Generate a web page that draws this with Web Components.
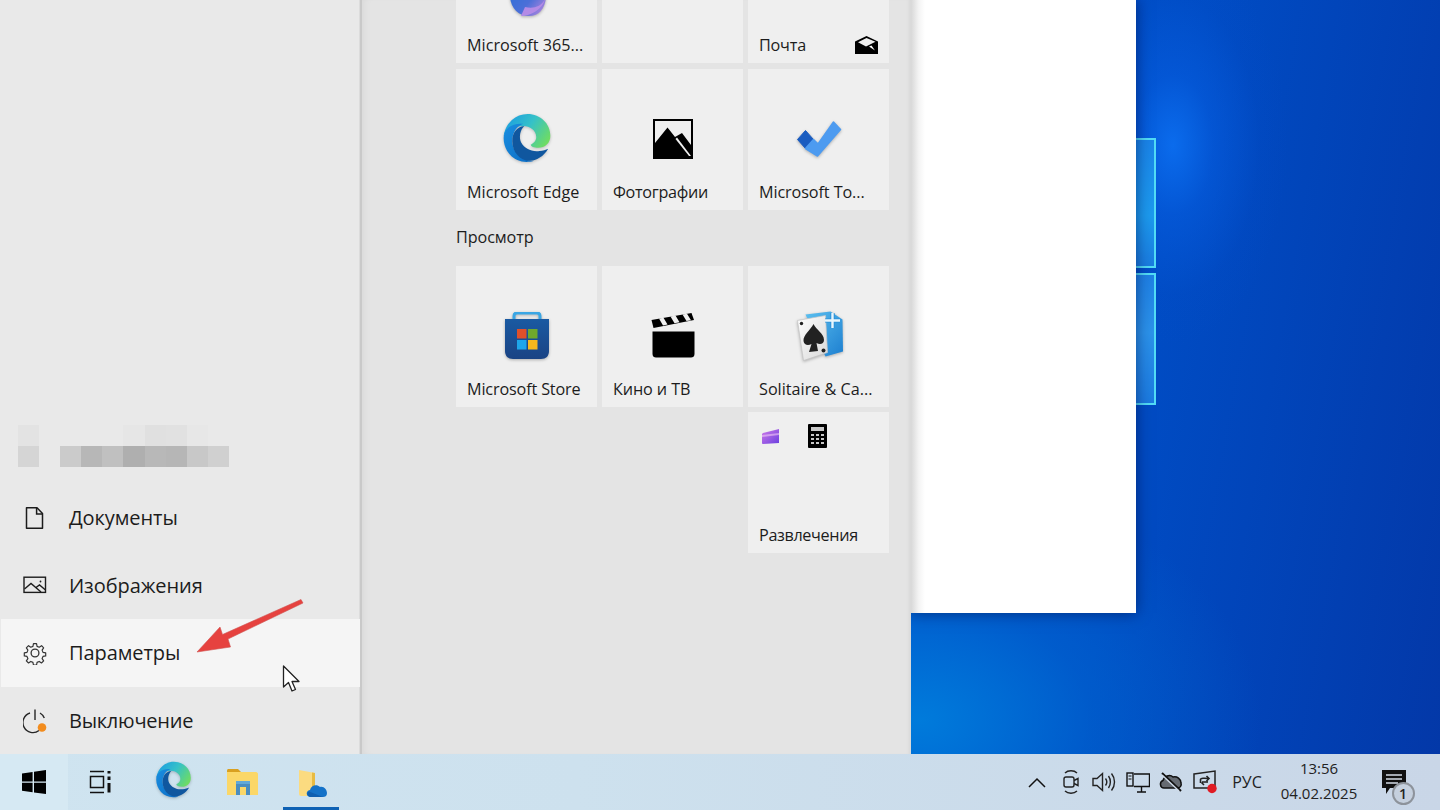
<!DOCTYPE html>
<html lang="ru"><head><meta charset="utf-8"><title>Start</title>
<style>
html,body{margin:0;padding:0;width:1440px;height:810px;overflow:hidden;background:#0050c8}
body{font-family:"Open Sans","Noto Sans",sans-serif;color:#1a1a1a}
svg{display:block}
.fx{filter:drop-shadow(0 1px 1.5px rgba(0,0,0,.28))}
</style></head><body>
<desk-screen>
  <start-menu slot="menu">
    <rail-item slot="rail" label="Документы"><svg width="24" height="24" viewBox="0 0 24 24" fill="none" stroke="#1c1c1c" stroke-width="1.5" style="margin-left:-1px"><path d="M4.5 1.800H15L20.500 7.500V22.200H4.500Z" stroke-linejoin="round"/><path d="M14.600 2V8H20.500"/></svg></rail-item>
    <rail-item slot="rail" label="Изображения"><svg width="24" height="24" viewBox="0 0 24 24" fill="none" stroke="#1c1c1c" stroke-width="1.400"><rect x="1" y="4.200" width="21.500" height="15.200"/><path d="M1.500 16L8 10.500 18 19M13 14.500l3.500-2.500 6 5"/><circle cx="17.500" cy="8.500" r=".9" fill="#1c1c1c" stroke="none"/></svg></rail-item>
    <rail-item slot="rail" label="Параметры" hot><svg width="24" height="24" viewBox="0 0 24 24" fill="none" stroke="#333" stroke-width="1.300"><path d="M10.300 1.600h3.400l.6 3 2.400 1 2.600-1.700 2.300 2.400-1.700 2.500 1 2.500 3 .6v3.300l-3 .6-1 2.400 1.700 2.600-2.400 2.300-2.500-1.700-2.400 1-.6 3h-3.400l-.6-3-2.400-1-2.500 1.700-2.400-2.300 1.700-2.600-1-2.400-3-.6v-3.300l3-.6 1-2.500-1.700-2.500 2.400-2.400 2.500 1.700 2.400-1z" transform="translate(1.200 1.200) scale(.9)" stroke-linejoin="round"/><circle cx="12" cy="12" r="3.900"/></svg></rail-item>
    <rail-item slot="rail" label="Выключение" style="--ls:-.25px"><svg width="24" height="26" viewBox="0 0 24 26" fill="none" stroke="#262626" stroke-width="1.400" style="margin-top:2px"><path d="M12 1.500V12"/><path d="M7 5A10 10 0 1 0 16 22.500"/><path d="M17 5A10 10 0 0 1 21.300 10"/><circle cx="19" cy="19.500" r="4.300" fill="#f28c1e" stroke="none"/></svg></rail-item>

    <app-tile label="Microsoft 365..." slot="row0"><svg class="fx" width="48" height="48" viewBox="0 0 48 48"><defs><linearGradient id="m3" x1="0" y1="0" x2="1" y2="1"><stop offset="0" stop-color="#1f6fd6"/><stop offset=".6" stop-color="#4b6fd8"/><stop offset="1" stop-color="#c78ae0"/></linearGradient></defs><path d="M12 2H36C44 2 44 10 44 16L43 28C42 40 36 47 26 47 16 47 8 40 7 28Z" fill="url(#m3)"/><path d="M18 47C28 47 40 40 42 30 38 38 30 40 22 38Z" fill="#b38be6"/></svg></app-tile>
    <app-tile label="" slot="row0"></app-tile>
    <app-tile label="Почта" slot="row0" corner style="--ls:-.2px"><svg width="23" height="18" viewBox="0 0 23 18"><path d="M11.500 0L23 5.600V18H0V5.600ZM3 6.200 11 10.500 20.500 5.800 11.500 1.900Z" fill="#000" fill-rule="evenodd"/><path d="M14 10.500L20 14.500 16.500 9.500Z" fill="#fff"/></svg></app-tile>

    <app-tile label="Microsoft Edge" slot="row1"><edge-logo size="50" style="margin-top:3px"></edge-logo></app-tile>
    <app-tile label="Фотографии" slot="row1" style="--ls:-.3px"><svg width="40" height="40" viewBox="0 0 40 40"><path d="M0 0H40V40H0ZM2 2V38H38V2Z" fill="#000" fill-rule="evenodd"/><path d="M2 24L14.500 8.500 22 18 29 14 38 26V38H2Z" fill="#000"/><path d="M22.500 20L36 37H38L24 18.500Z" fill="#f0f0f0"/></svg></app-tile>
    <app-tile label="Microsoft To..." slot="row1" style="--ls:-.1px"><svg class="fx" width="46" height="40" viewBox="0 0 46 40"><path d="M1.500 20.500L9.500 11.500 17.500 20.500 9.500 29.500Z" fill="#1a5cc0" stroke="#1a5cc0" stroke-linejoin="round"/><path d="M9.500 29.500L17.500 20.500 22 25 37.500 3 44.500 10.500 21.500 37Z" fill="#4d9bf0" stroke="#4d9bf0" stroke-width="1.500" stroke-linejoin="round"/></svg></app-tile>

    <section-title slot="head">Просмотр</section-title>

    <app-tile label="Microsoft Store" slot="row2" style="--ls:-.15px"><svg class="fx" width="46" height="48" viewBox="0 0 46 48"><defs><linearGradient id="st" x1="0" y1="0" x2="0" y2="1"><stop offset="0" stop-color="#1a5aa2"/><stop offset="1" stop-color="#1a4384"/></linearGradient></defs><path d="M10 9V4C10 2 11 1 13 1H33C35 1 36 2 36 4V9" fill="none" stroke="#3aa6e4" stroke-width="3"/><path d="M1 7H45V39C45 44 42 47 37 47H9C4 47 1 44 1 39Z" fill="url(#st)"/><rect x="13" y="17" width="9.500" height="9.500" fill="#e0502a"/><rect x="24" y="17" width="9.500" height="9.500" fill="#6fa82c"/><rect x="13" y="28" width="9.500" height="9.500" fill="#1ea6ea"/><rect x="24" y="28" width="9.500" height="9.500" fill="#f4b81e"/></svg></app-tile>
    <app-tile label="Кино и ТВ" slot="row2" style="--ls:-.1px"><svg width="44" height="46" viewBox="0 0 44 46"><path d="M.5 7L40.500 0 43 7 2.500 15Z" fill="#000"/><path d="M8 5.500L12.500 4.800 16.500 11.500 12 12.500ZM19.500 3.500L24.500 2.500 28.500 9.200 23.500 10.200ZM31.500 1.500L36 .8 40 7.200 35.500 8Z" fill="#f0f0f0"/><path d="M1.500 18.500H43.500V41C43.500 43.500 42 44.500 40 44.500H5C3 44.500 1.500 43.500 1.500 41Z" fill="#000"/></svg></app-tile>
    <app-tile label="Solitaire &amp; Ca..." slot="row2"><svg class="fx" width="48" height="50" viewBox="0 0 48 50"><defs><linearGradient id="bl" x1="0" y1="0" x2="1" y2="1"><stop offset="0" stop-color="#5cc0f0"/><stop offset="1" stop-color="#1d7fd0"/></linearGradient><linearGradient id="cd" x1="0" y1="0" x2="1" y2="1"><stop offset="0" stop-color="#fff"/><stop offset="1" stop-color="#d8d8d8"/></linearGradient></defs><path d="M10.500 3.500L35.500 .5 47.500 8.500 48 40.500 30.500 45.500Z" fill="url(#bl)"/><path d="M2.500 9.500L30.500 4.500 32.500 41.500 8.500 49.500Z" fill="url(#cd)" stroke="#c4c4c4" stroke-width=".7" stroke-linejoin="round"/><path d="M18.500 13C21 19 29 22 29 29 29 33 25 34 21.500 32L23 40 14 41 16.500 33C13 35 9 34 8.500 30 8 24 15.500 19 18.500 13Z" fill="#222"/><circle cx="6.500" cy="12.500" r="1.700" fill="#222"/><circle cx="28.500" cy="39.500" r="2" fill="#222"/><path d="M37.500 2V17M30 9.500H45" stroke="#2a8fd8" stroke-width="4.200"/><path d="M37.500 2V17M30 9.500H45" stroke="#e8f6fd" stroke-width="2.400"/></svg></app-tile>

    <app-tile label="" slot="row3" style="visibility:hidden"></app-tile>
    <app-tile label="" slot="row3" style="visibility:hidden"></app-tile>
    <app-tile label="Развлечения" slot="row3" folder style="--ls:-.35px">
      <svg slot="mini" width="19" height="17" viewBox="0 0 19 17"><defs><linearGradient id="pu" x1="0" y1="0" x2="1" y2="1"><stop offset="0" stop-color="#d07ae8"/><stop offset="1" stop-color="#6a3fe0"/></linearGradient></defs><path d="M1 5L17 1V15L1 16C.5 16 0 15.500 0 15V6Z" fill="url(#pu)"/><path d="M0 7L17 5V7L0 9Z" fill="#f0c6f6" opacity=".6"/></svg>
      <svg slot="mini" width="19" height="24" viewBox="0 0 19 24"><rect width="19" height="24" fill="#000" rx="1"/><rect x="3" y="3" width="13" height="4" fill="#c8c8c8"/><g fill="#c8c8c8"><rect x="3" y="10" width="3" height="2"/><rect x="8" y="10" width="3" height="2"/><rect x="13" y="10" width="3" height="2"/><rect x="3" y="14" width="3" height="2"/><rect x="8" y="14" width="3" height="2"/><rect x="13" y="14" width="3" height="2"/><rect x="3" y="18" width="3" height="2"/><rect x="8" y="18" width="3" height="2"/><rect x="13" y="18" width="3" height="2"/></g></svg>
    </app-tile>
  </start-menu>
  <task-bar slot="bar">
    <task-btn slot="left" w="68" light><svg width="24" height="24" viewBox="0 0 24 24" fill="#000"><path d="M0 3.400L10.600 1.900V11.400H0ZM12 1.700L24 0V11.400H12ZM0 12.700H10.600V22.200L0 20.700ZM12 12.700H24V24L12 22.400Z"/></svg></task-btn>
    <task-btn slot="left" w="66"><svg width="24" height="24" viewBox="0 0 24 24" fill="none" stroke="#111" stroke-width="1.500"><path d="M1 1.500H15M1 22.500H15"/><rect x="1.500" y="6.500" width="13" height="11"/><path d="M20 1V3.500M20 22.500V13M20 6.500V10" stroke-width="3"/></svg></task-btn>
    <task-btn slot="left" w="78"><edge-logo size="37"></edge-logo></task-btn>
    <task-btn slot="left" w="59"><svg width="32" height="28" viewBox="0 0 32 28"><path d="M1 3C1 1 2 1 3 1H12L15 4H1Z" fill="#d9a020"/><path d="M1 4H30C31 4 32 5 32 6V27H1Z" fill="#fbd768"/><path d="M10 27V15C10 13.500 11 13 12 13H22C23 13 24 13.500 24 15V27H20V19H14V27Z" fill="#4b8dbf"/><path d="M10 13H24V16H10Z" fill="#62a8d8"/></svg></task-btn>
    <task-btn slot="left" w="56" active style="margin-left:12px;padding-left:4px"><svg width="28" height="32" viewBox="0 0 28 32"><path d="M0 4L16 7V30H2C1 30 0 29 0 28Z" fill="#fbdb80"/><path d="M13 6.500L16 7V22L13 24Z" fill="#e8bb42"/><path d="M12 31C7 31 6 25 11 24 12 19 18 18 21 21 25 20 28 24 28 27 28 30 26 31 24 31Z" fill="#1472c8"/><path d="M12 31C8 31 7 27 10 25.500L24 31Z" fill="#0f5fb0"/></svg></task-btn>

    <tray-ico slot="right" w="34"><svg width="18" height="11" viewBox="0 0 18 11" fill="none" stroke="#111" stroke-width="1.500"><path d="M1 10L9 2 17 10"/></svg></tray-ico>
    <tray-ico slot="right" w="34"><svg width="18" height="26" viewBox="0 0 18 26" fill="none" stroke="#222" stroke-width="1.400"><path d="M3 4C6 1 12 1 15 4M3 22C6 25 12 25 15 22"/><rect x="2" y="8" width="10" height="10" rx="2"/><path d="M12 11.500L16 9.500V16.500L12 14.500"/></svg></tray-ico>
    <tray-ico slot="right" w="33"><svg width="25" height="22" viewBox="0 0 25 22" fill="none" stroke="#222" stroke-width="1.400"><path d="M1 7.500H5L10.500 2.500V19.500L5 14.500H1Z"/><path d="M13.500 7.500C15 9.500 15 12.500 13.500 14.500M16.500 5C19 8.500 19 13.500 16.500 17M19.500 2.500C23.500 7.500 23.500 14.500 19.500 19.500"/></svg></tray-ico>
    <tray-ico slot="right" w="33"><svg width="24" height="21" viewBox="0 0 24 21" fill="none" stroke="#111" stroke-width="1.400"><path d="M8 2H23.500V14.500H8"/><path d="M11 20H20M15.500 14.500V20"/><rect x="1" y="1" width="6" height="13"/><path d="M2.500 4H5.500M2.500 7H5.500" stroke-width="1.100"/></svg></tray-ico>
    <tray-ico slot="right" w="33"><svg width="24" height="20" viewBox="0 0 24 20" fill="none" stroke="#111" stroke-width="1.500"><path d="M5 16C1 16 0 10 4 8.500 5 4 11 2 14 5 18 4 22 7 22 11 23 14 21 16 18 16Z" fill="#666b72"/><path d="M3 1L22 19" stroke-width="2"/><path d="M3 3L20 19" stroke="#d0dbe8" stroke-width="1.300"/></svg></tray-ico>
    <tray-ico slot="right" w="35"><svg width="24" height="24" viewBox="0 0 24 24" fill="none" stroke="#222" stroke-width="1.500"><path d="M1 4L22 1V18H1Z"/><path d="M7.500 13V9.500C7.500 8 12 8 15 8.500M13.500 6L16 8.500 13.500 11M15 12H9M11 15L8.500 12.500" stroke-width="1.600"/><circle cx="19" cy="18.500" r="4.700" fill="#e01b24" stroke="none"/></svg></tray-ico>
    <clock-text slot="right"></clock-text>
    <note-btn slot="right"></note-btn>
  </task-bar>
  <svg slot="over" style="position:absolute;left:190px;top:595px;z-index:9" width="120" height="64" viewBox="190 595 120 64"><path d="M301 599.500L303 603 228 639 230.500 647 197 652 220 627 222.500 634.500Z" fill="#e6423f" stroke="#cf5350" stroke-width=".6" stroke-linejoin="round"/></svg>
  <svg slot="over" style="position:absolute;left:282px;top:665px;z-index:9" width="19" height="28" viewBox="0 0 19 28"><path d="M1.500 1V22L6.500 17.500 10 26 13.500 24.500 10 16.500H17Z" fill="#fff" stroke="#222" stroke-width="1.300" stroke-linejoin="round"/></svg>
</desk-screen>
<script>
function def(name, css, html){
  customElements.define(name, class extends HTMLElement{
    constructor(){super();const r=this.attachShadow({mode:'open'});r.innerHTML='<style>'+css+'</style>'+(typeof html==='function'?html(this):html);}
  });
}
def('desk-screen',`
 :host{display:flex;flex-direction:column;position:relative;width:1440px;height:810px;overflow:hidden}
 .top{flex:1;min-height:0;display:flex}
 .paper{flex:1;position:relative;overflow:hidden;background:
   radial-gradient(ellipse 115px 200px at 262px 145px,rgba(14,118,250,.75) 0,rgba(8,98,232,.45) 35%,rgba(5,80,210,.12) 75%,rgba(5,80,210,0) 100%),
   radial-gradient(ellipse 340px 240px at 10px 720px,rgba(0,125,220,.95) 0,rgba(0,105,210,.5) 50%,rgba(0,90,200,0) 100%),
   linear-gradient(100deg,#0056d0 0,#004cc4 45%,#0338a8 100%)}
 .win{width:225px;height:613px;background:#fff;box-shadow:0 0 14px rgba(0,10,60,.55);position:absolute;left:0;top:0;z-index:2}
 .win::before{content:"";position:absolute;left:0;top:0;bottom:0;width:14px;background:linear-gradient(90deg,#d8d8d8,#f4f4f4 55%,#fff)}
 .pane{position:absolute;left:225px;width:20px;border:2px solid #52dcf6;border-left:0;box-sizing:border-box}
 .p1{top:138px;height:130px;background:linear-gradient(180deg,#1a84e8,#1c9aee 60%,#1a7ce0)}
 .p2{top:273px;height:132px;background:linear-gradient(180deg,#1e80e4,#2b92ea 45%,#1b7ae0)}
`,`<div class="top"><slot name="menu"></slot><div class="paper"><div class="pane p1"></div><div class="pane p2"></div><div class="win"></div></div></div><slot name="bar"></slot><slot name="over"></slot>`);

def('start-menu',`
 :host{display:flex;width:911px;height:754px;flex:none;overflow:hidden;position:relative;z-index:3}
 .rail{width:360px;background:#e9e9e9;display:flex;flex-direction:column;justify-content:flex-end;flex:none;box-shadow:inset -1px 0 0 #dcdcdc}
 .user{display:grid;grid-template-columns:repeat(10,21.100px);grid-template-rows:21px 21px;margin:0 0 17px 18px}
 .panel{flex:1;background:#e4e4e4;border-left:2px solid #c9c9c9;box-shadow:inset 8px 0 8px -6px rgba(0,0,0,.05),inset -4px 0 4px -3px rgba(0,0,0,.08);padding-left:94px;display:flex;flex-direction:column;overflow:hidden}
 .row{display:flex;gap:5px;flex:none}
 .row+.row{margin-top:5.500px}
 .r0{margin-top:-78px}
 .r2{margin-top:0!important}
`,()=>{
  const g={ '0,0':'#e3e3e3','0,5':'#e6e6e6','0,6':'#e0e0e0','0,7':'#e1e1e1','0,8':'#e7e7e7',
    '1,0':'#d5d5d5','1,2':'#cbcbcb','1,3':'#b7b7b7','1,4':'#c0c0c0','1,5':'#afafaf','1,6':'#b8b8b8','1,7':'#b6b6b6','1,8':'#c8c8c8','1,9':'#d0d0d0'};
  let h='';for(let r=0;r<2;r++)for(let c=0;c<10;c++){h+='<i style="display:block;background:'+(g[r+','+c]||'transparent')+'"></i>'}
  return `<div class="rail"><div class="user" aria-hidden="true">${h}</div><slot name="rail"></slot></div>
  <div class="panel"><div class="row r0"><slot name="row0"></slot></div><div class="row"><slot name="row1"></slot></div><slot name="head"></slot><div class="row r2"><slot name="row2"></slot></div><div class="row"><slot name="row3"></slot></div></div>`;
});

def('rail-item',`
 :host{display:flex;align-items:center;height:67.500px;flex:none;font:20px/1 "Open Sans","Noto Sans",sans-serif;color:#1c1c1c}
 :host([hot]){background:#f5f5f5;margin-left:1px}
 :host([hot]) .i{width:68px}
 .i{width:69px;flex:none;display:flex;justify-content:center;box-sizing:border-box}
 span{letter-spacing:var(--ls,-.08px);padding-top:1px}
`,el=>`<div class="i"><slot></slot></div><span>${el.getAttribute('label')}</span>`);

def('app-tile',`
 :host{display:block;position:relative;width:141px;height:141px;flex:none;background:#efefef}
 .c{position:absolute;inset:0;display:flex;align-items:center;justify-content:center}
 :host([corner]) .c{inset:auto 11px 9px auto}
 :host([folder]) .m{display:flex;position:absolute;left:14px;top:12px;gap:27px;align-items:center}
 .l{position:absolute;left:11px;bottom:8px;font:16.200px/20px "Open Sans","Noto Sans",sans-serif;letter-spacing:var(--ls,0);color:#1c1c1c;white-space:nowrap}
`,el=>`<div class="c"><slot></slot></div><div class="m"><slot name="mini"></slot></div><span class="l">${el.getAttribute('label')||''}</span>`);

def('section-title',`:host{display:block;height:56px;flex:none;box-sizing:border-box;padding-top:17.500px;font:16.200px/20px "Open Sans","Noto Sans",sans-serif;letter-spacing:-.1px;color:#1c1c1c}`,`<slot></slot>`);

def('edge-logo',`:host{display:block;filter:drop-shadow(0 1px 1.5px rgba(0,0,0,.22))}`,el=>{const s=el.getAttribute('size');return `<svg width="${s}" height="${s}" viewBox="2 1 45 46"><defs>
 <linearGradient id="a" x1="0" y1=".2" x2="1" y2=".7"><stop offset="0" stop-color="#1b9de2"/><stop offset=".5" stop-color="#35c1c8"/><stop offset="1" stop-color="#6fdc62"/></linearGradient>
 <linearGradient id="b" x1="0" y1="0" x2="1" y2="1"><stop offset="0" stop-color="#1a8ee0"/><stop offset="1" stop-color="#0c6cc4"/></linearGradient></defs>
 <path d="M3 22C5 10 14 2 25 2 37 2 46 11 46 22 46 29 41 33 35 33 31 33 28 32 28 30 30 29 33 27 33 23 33 17 27 13 21 13 13 13 6 17 3 22Z" fill="url(#a)"/>
 <path d="M3 24C3 15 11 10 21 11 15 13 11 19 11 27 11 37 20 45 31 45 28 46 26 46 24 46 12 46 3 36 3 24Z" fill="url(#b)"/>
 <path d="M11 27C11 19 15 14 22 13 18 17 17 23 19 28 22 34 29 37 36 36 39 36 42 35 44 34 40 41 33 45 27 45 18 45 11 37 11 27Z" fill="#10579f"/></svg>`});

def('task-bar',`
 :host{display:flex;height:56px;flex:none;justify-content:space-between;background:linear-gradient(90deg,#cfe4f0 0,#cde1ee 40%,#c9d6e7 100%);position:relative;z-index:4}
 .s{display:flex;align-items:stretch}
 .r{padding-right:15px}
`,`<div class="s"><slot name="left"></slot></div><div class="s r"><slot name="right"></slot></div>`);

def('task-btn',`
 :host{display:flex;align-items:center;justify-content:center;height:56px;box-sizing:border-box;flex:none;position:relative}
 :host([light]){background:#d6e9f3}
 :host([active])::after{content:"";position:absolute;left:0;right:0;bottom:0;height:3px;background:#0f62b4}
`,el=>{el.style.width=el.getAttribute('w')+'px';return '<slot></slot>'});

def('tray-ico',`:host{display:flex;align-items:center;justify-content:center;height:56px;flex:none}`,el=>{el.style.width=el.getAttribute('w')+'px';return '<slot></slot>'});

def('clock-text',`
 :host{display:flex;align-items:stretch;height:56px;flex:none;font:15px/1 "Open Sans","Noto Sans",sans-serif;color:#222}
 .lang{width:50px;display:flex;align-items:center;justify-content:center;font-size:16px}
 .t{width:94px;display:flex;flex-direction:column;align-items:center;justify-content:center;gap:10px;padding-bottom:2px;box-sizing:border-box}
`,`<div class="lang">РУС</div><div class="t"><span>13:56</span><span>04.02.2025</span></div>`);

def('note-btn',`
 :host{display:block;position:relative;width:59px;height:56px;flex:none}
 svg{position:absolute;left:16px;top:16px}
 b{position:absolute;left:25.500px;top:27.500px;width:23px;height:23px;box-sizing:border-box;border-radius:50%;border:2px solid #8d939b;background:#c5d0de;font:600 14px/19px "Open Sans","Noto Sans",sans-serif;text-align:center;color:#222}
`,`<svg width="24" height="24" viewBox="0 0 24 24"><path d="M0 0H24V18H8L4 24V18H0Z" fill="#111"/><path d="M4 5H20M4 9H20M4 13H16" stroke="#d5dde8" stroke-width="1.500"/></svg><b>1</b>`);
</script>
</body></html>
